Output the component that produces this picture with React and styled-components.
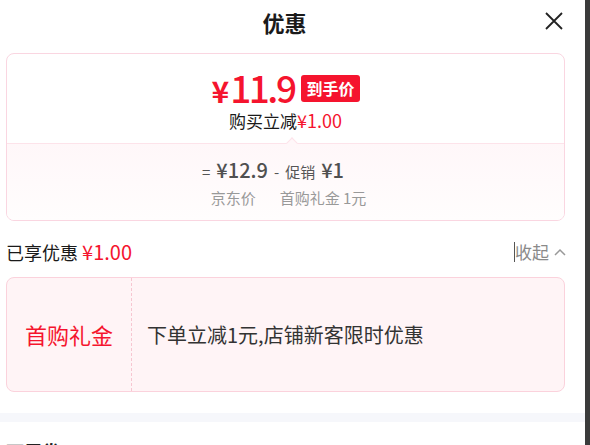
import React from "react";
import styled, { createGlobalStyle } from "styled-components";

const Global = createGlobalStyle`
  html, body { margin: 0; padding: 0; background: #fff; overflow: hidden; }
  body { font-family: "Noto Sans CJK SC", "Noto Sans", sans-serif; line-height: 1.3; }
`;

const Frame = styled.div`
  display: flex;
  width: 590px;
  height: 445px;
  overflow: hidden;
`;

const Sheet = styled.div`
  width: 585px;
  display: flex;
  flex-direction: column;
  & > * { flex-shrink: 0; }
`;

const Scrollbar = styled.div`
  width: 5px;
  background: #3b3b3b;
`;

const Header = styled.div`
  position: relative;
  height: 45px;
  display: flex;
  align-items: center;
  justify-content: center;
  padding-right: 16px;
`;

const Title = styled.div`
  font-size: 22px;
  font-weight: 700;
  color: #1a1a1a;
  line-height: 1;
  margin-top: -2px;
`;

const Close = styled.button`
  position: absolute;
  right: 21px;
  top: 11px;
  width: 20px;
  height: 20px;
  padding: 0;
  border: 0;
  background: none;
  display: flex;
`;

const Content = styled.div`
  padding: 8px 20px 0 6px;
  display: flex;
  flex-direction: column;
`;

const PriceCard = styled.div`
  border: 1px solid #fad6e1;
  border-radius: 8px;
  overflow: hidden;
`;

const PriceTop = styled.div`
  height: 89px;
  display: flex;
  flex-direction: column;
  align-items: center;
  padding-top: 14px;
  box-sizing: border-box;
`;

const PriceRow = styled.div`
  display: flex;
  align-items: center;
  gap: 7px;
  height: 40px;
`;

const BigPrice = styled.span`
  color: #f5142e;
  font-size: 37px;
  font-weight: 500;
  letter-spacing: -2.5px;
  line-height: 40px;
`;

const Yen = styled.span`
  font-size: 30px;
  font-weight: 700;
  letter-spacing: 0;
  margin-right: 1px;
`;

const Badge = styled.span`
  background: #f5142e;
  color: #fff;
  font-size: 16px;
  font-weight: 700;
  border-radius: 3px;
  padding: 0 5px;
  height: 27px;
  line-height: 27px;
`;

const Reduce = styled.div`
  font-size: 17px;
  color: #1a1a1a;
  margin-top: 1px;
  line-height: 22px;
`;

const Red = styled.span`
  color: #f5142e;
  font-size: ${(p) => p.$size || "inherit"};
`;

const PriceBottom = styled.div`
  position: relative;
  border-top: 1px solid #fde3ea;
  background: linear-gradient(#fff7f9, #fffdfd);
  height: 77px;
  display: flex;
  flex-direction: column;
  align-items: center;
  padding-top: 14px;
  box-sizing: border-box;
  color: #555;
  &::before {
    content: "";
    position: absolute;
    top: -5px;
    left: 281px;
    width: 7px;
    height: 7px;
    background: #fff7f9;
    border-top: 1px solid #fde3ea;
    border-left: 1px solid #fde3ea;
    transform: rotate(45deg);
  }
`;

const Formula = styled.div`
  display: flex;
  align-items: baseline;
  gap: 6px;
  line-height: 24px;
  margin-left: -25px;
`;

const Op = styled.span`
  font-size: 15px;
  color: #555;
`;

const Amount = styled.span`
  font-size: 20px;
  font-weight: 500;
  color: #505050;
`;

const Labels = styled.div`
  display: flex;
  gap: 24px;
  font-size: 15px;
  line-height: 20px;
  color: #999;
  margin-top: 4px;
  margin-left: 6px;
`;

const SummaryRow = styled.div`
  display: flex;
  justify-content: space-between;
  align-items: center;
  margin-top: 19px;
  height: 24px;
`;

const Summary = styled.div`
  font-size: 18px;
  color: #1a1a1a;
`;

const Toggle = styled.div`
  display: flex;
  align-items: center;
  gap: 4px;
  font-size: 17px;
  color: #8a8a8a;
  border-left: 1px solid #555;
  line-height: 20px;
  margin-right: -2px;
`;

const CouponCard = styled.div`
  margin-top: 13px;
  height: 115px;
  border: 1px solid #fbd2dc;
  border-radius: 8px;
  background: #fff4f6;
  display: flex;
  box-sizing: border-box;
`;

const CouponName = styled.div`
  width: 124px;
  border-right: 1px dashed #f7c6d1;
  display: flex;
  align-items: center;
  justify-content: center;
  color: #f5142e;
  font-size: 22px;
`;

const CouponDesc = styled.div`
  display: flex;
  align-items: center;
  padding-left: 15px;
  font-size: 20px;
  color: #333;
`;

const Band = styled.div`
  margin-top: 21px;
  height: 9px;
  background: #f6f7fb;
`;

const NextTitle = styled.div`
  padding: 19px 0 0 6px;
  font-size: 18px;
  font-weight: 700;
  color: #222;
  line-height: 20px;
`;

export default function App() {
  return (
    <>
      <Global />
      <Frame>
        <Sheet>
          <Header>
            <Title>优惠</Title>
            <Close aria-label="关闭">
              <svg width="20" height="20" viewBox="0 0 20 20">
                <path d="M2 2 L18 18 M18 2 L2 18" stroke="#222" strokeWidth="1.8" fill="none" />
              </svg>
            </Close>
          </Header>
          <Content>
            <PriceCard>
              <PriceTop>
                <PriceRow>
                  <BigPrice><Yen>¥</Yen>11.9</BigPrice>
                  <Badge>到手价</Badge>
                </PriceRow>
                <Reduce>购买立减<Red $size="18px">¥1.00</Red></Reduce>
              </PriceTop>
              <PriceBottom>
                <Formula>
                  <Op>=</Op>
                  <Amount>¥12.9</Amount>
                  <Op>-</Op>
                  <Op>促销</Op>
                  <Amount>¥1</Amount>
                </Formula>
                <Labels>
                  <span>京东价</span>
                  <span>首购礼金 1元</span>
                </Labels>
              </PriceBottom>
            </PriceCard>
            <SummaryRow>
              <Summary>已享优惠 <Red $size="20px">¥1.00</Red></Summary>
              <Toggle>
                收起
                <svg width="14" height="10" viewBox="0 0 14 10">
                  <path d="M2 8 L7 3 L12 8" stroke="#999" strokeWidth="1.5" fill="none" />
                </svg>
              </Toggle>
            </SummaryRow>
            <CouponCard>
              <CouponName>首购礼金</CouponName>
              <CouponDesc>下单立减1元,店铺新客限时优惠</CouponDesc>
            </CouponCard>
          </Content>
          <Band />
          <NextTitle>可用券</NextTitle>
        </Sheet>
        <Scrollbar />
      </Frame>
    </>
  );
}
